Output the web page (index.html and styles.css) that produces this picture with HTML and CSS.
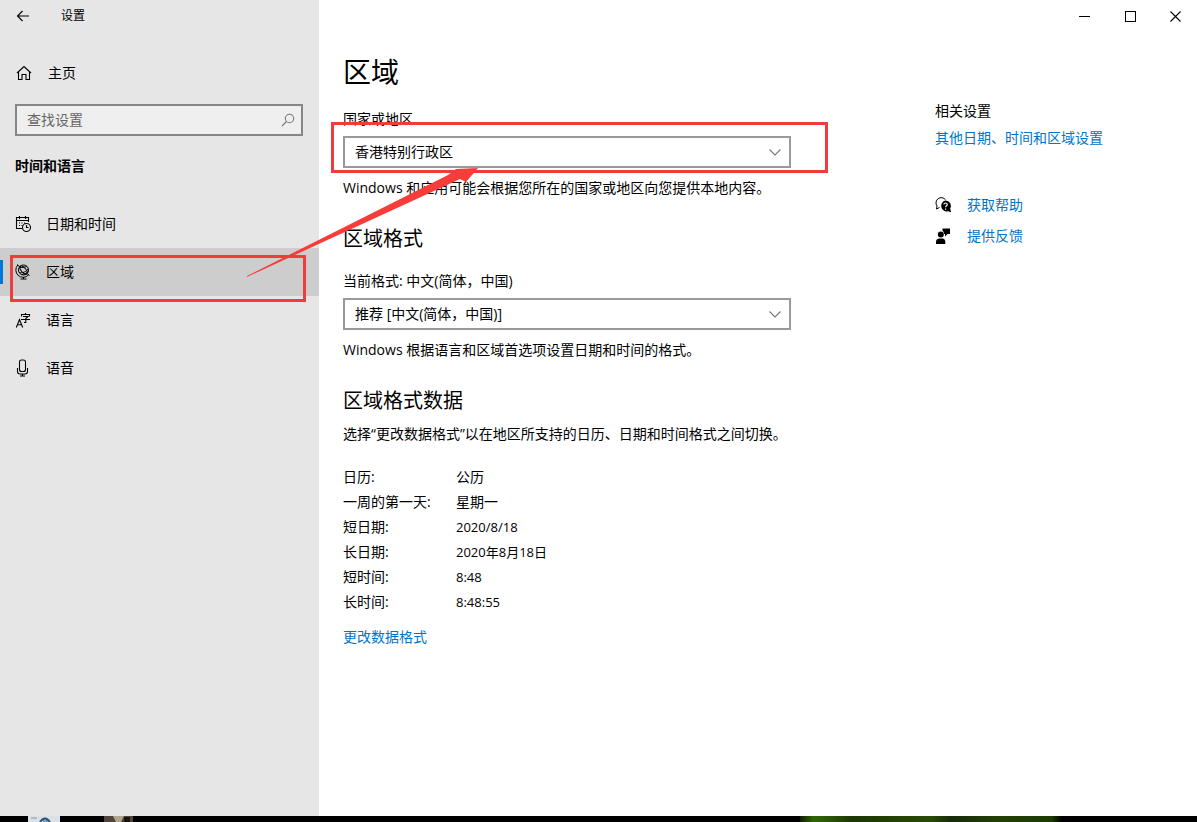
FILE: index.html
```html
<!DOCTYPE html>
<html lang="zh-CN">
<head>
<meta charset="utf-8">
<meta name="viewport" content="width=device-width, initial-scale=1">
<title>设置</title>
<link rel="stylesheet" href="styles.css">
</head>
<body>
<div class="window">
  <aside class="sidebar">
    <header class="side-title">
      <button class="back" type="button" aria-label="返回">
        <svg width="14" height="12" viewBox="0 0 14 12" class="line"><path d="M13 6H1.500M6.500 1L1.500 6l5 5"/></svg>
      </button>
      <span>设置</span>
    </header>
    <a class="home" href="#">
      <svg width="16" height="16" viewBox="0 0 16 16" class="line"><path d="M1 8L8 1.500 15 8M2.500 7v7.500h3.500V9.500h4v5h3.500V7"/></svg>
      <span>主页</span>
    </a>
    <label class="search">
      <input type="search" placeholder="查找设置" aria-label="查找设置">
      <svg width="14" height="14" viewBox="0 0 14 14" class="line"><circle cx="8.500" cy="5.500" r="4.200"/><path d="M5.500 8.500L1 13"/></svg>
    </label>
    <h2 class="side-heading">时间和语言</h2>
    <nav class="nav">
      <a href="#">
        <svg width="16" height="16" viewBox="0 0 16 16" class="line"><path d="M7 12.500H1.500v-11h12V6M1.500 4.500h12M4.500 0v3M10.500 0v3"/><path d="M4 7h1M6.500 7h1M9 7h1M4 9.500h1M6.500 9.500h1"/><circle cx="11.500" cy="11.500" r="4"/><path d="M11.500 9v2.500h2"/></svg>
        <span>日期和时间</span>
      </a>
      <a href="#" class="current" aria-current="page">
        <svg width="16" height="16" viewBox="0 0 16 16" class="line globe"><circle cx="8.500" cy="6" r="5"/><ellipse cx="8.500" cy="6" rx="2.300" ry="5" transform="rotate(-40 8.500 6)"/><path d="M4.500 3.500c3 .2 6-.3 7.500-1.500M4.200 8.500c3.300 1 7-.8 9-3.700M6.500 10.500c2.500 0 5-1 6.500-3"/><path d="M2.800 1A7 7 0 0 0 13.500 11M2 .5l2.500 2M12 9.500l2.500 2M8.500 13v2M5.500 15h6"/></svg>
        <span>区域</span>
      </a>
      <a href="#">
        <svg width="16" height="16" viewBox="0 0 16 16" class="line"><path d="M1.300 15.500L4.500 7.500l3.200 8M2.500 12.700h4"/><path d="M10.500 1v1.500M6.500 4.500v-2h8v2M8 4.500h5L10.800 6.500v4H9M6 7.500h9"/></svg>
        <span>语言</span>
      </a>
      <a href="#">
        <svg width="16" height="18" viewBox="0 0 16 18" class="line"><rect x="4.500" y="1" width="6" height="11.500" rx="2"/><path d="M2.500 9v3.500q0 2.500 2.500 2.500h5q2.500 0 2.500-2.500V9M7.500 15v2M5 17h5"/></svg>
        <span>语音</span>
      </a>
    </nav>
  </aside>

  <main class="main">
    <div class="controls">
      <button type="button" aria-label="最小化"><svg width="11" height="11" viewBox="0 0 11 11" class="line crisp"><path d="M0 5.500h11"/></svg></button>
      <button type="button" aria-label="最大化"><svg width="11" height="11" viewBox="0 0 11 11" class="line crisp"><path d="M.5.5h10v10H.5z"/></svg></button>
      <button type="button" aria-label="关闭"><svg width="11" height="11" viewBox="0 0 11 11" class="line"><path d="M.5.5l10 10M10.500.5l-10 10"/></svg></button>
    </div>
    <div class="columns">
      <section class="content">
        <h1>区域</h1>
        <label class="field-label" for="country">国家或地区</label>
        <div class="select">
          <select id="country"><option>香港特别行政区</option></select>
          <svg width="12" height="7" viewBox="0 0 12 7" class="line"><path d="M.5.5L6 6 11.500.5"/></svg>
        </div>
        <p class="hint">Windows 和应用可能会根据您所在的国家或地区向您提供本地内容。</p>

        <h2>区域格式</h2>
        <label class="field-label" for="format">当前格式: 中文(简体，中国)</label>
        <div class="select">
          <select id="format"><option>推荐 [中文(简体，中国)]</option></select>
          <svg width="12" height="7" viewBox="0 0 12 7" class="line"><path d="M.5.5L6 6 11.500.5"/></svg>
        </div>
        <p class="hint">Windows 根据语言和区域首选项设置日期和时间的格式。</p>

        <h2>区域格式数据</h2>
        <p class="data-intro">选择“更改数据格式”以在地区所支持的日历、日期和时间格式之间切换。</p>
        <table class="data">
          <tr><th scope="row">日历:</th><td>公历</td></tr>
          <tr><th scope="row">一周的第一天:</th><td>星期一</td></tr>
          <tr><th scope="row">短日期:</th><td class="numeric">2020/8/18</td></tr>
          <tr><th scope="row">长日期:</th><td class="numeric">2020年8月18日</td></tr>
          <tr><th scope="row">短时间:</th><td class="numeric">8:48</td></tr>
          <tr><th scope="row">长时间:</th><td class="numeric">8:48:55</td></tr>
        </table>
        <a class="link" href="#">更改数据格式</a>
      </section>

      <aside class="related">
        <h3>相关设置</h3>
        <a class="link" href="#">其他日期、时间和区域设置</a>
        <div class="support">
          <a class="link" href="#">
            <svg width="17" height="17" viewBox="0 0 17 17"><path d="M4.500 10.500L1.500 12l.5-3A4.800 4.800 0 1 1 10.500 2.800" fill="none" stroke="#000"/><path d="M10.500 3.500a5.500 5.500 0 0 1 4.700 8.300l1 3.500-3.300-1A5.500 5.500 0 1 1 10.500 3.500z" fill="#000"/><path d="M8.800 7.500q.2-1.500 1.800-1.500t1.700 1.500c0 1.200-1.700 1.300-1.700 2.800M10.600 11.500v1.200" fill="none" stroke="#fff" stroke-width="1.200"/></svg>
            <span>获取帮助</span>
          </a>
          <a class="link" href="#">
            <svg width="17" height="17" viewBox="0 0 17 17"><circle cx="5.800" cy="6.500" r="3"/><path d="M1 16v-2q0-3.500 3.500-3.500h2.800q3 0 3 3.500v2zM7.500.5H15V6h-2.500L10 8.500V6H9.200Q9 3.500 7.500 2.700z"/></svg>
            <span>提供反馈</span>
          </a>
        </div>
      </aside>
    </div>
  </main>
</div>
<div class="desktop-edge">
  <svg width="110" height="6" viewBox="0 0 110 6"><rect width="32" height="6" fill="#dce1e5"/><path d="M3 2h6" stroke="#8b9094"/><path d="M12 6q5-7 10 0" fill="none" stroke="#24567d" stroke-width="2"/><path d="M15 5h5" stroke="#24567d"/><rect x="76" width="29" height="6" fill="#51443b"/><path d="M85 0h11l-3 6h-5z" fill="#b0a58d"/><path d="M96 1h6v5h-6z" fill="#1b1512"/></svg>
  <div class="leaf"></div>
</div>

<div class="mark mark-nav"></div>
<div class="mark mark-country"></div>
<svg class="arrow" width="240" height="114" viewBox="0 0 240 114"><path d="M1 109L202 8l8-6 22-1-12 14-6-3L1 110z"/></svg>
</body>
</html>
```
FILE: styles.css
```css
* { box-sizing: border-box; }

body {
  margin: 0;
  min-height: 100vh;
  display: flex;
  flex-direction: column;
  position: relative;
  overflow-x: hidden;
  background: #fff;
  color: #000;
  font: 14px/20px "Open Sans", "Noto Sans CJK SC", sans-serif;
}

h1, h2, h3, p { margin: 0; font-weight: 400; }
a { color: inherit; text-decoration: none; }
svg { flex: none; display: block; }
button { border: 0; padding: 0; background: none; color: inherit; display: grid; place-items: center; }

.line { fill: none; stroke: currentColor; stroke-width: 1.1; }
.crisp { shape-rendering: crispEdges; }
.globe { stroke-width: 1; }

.window { flex: 1; display: grid; grid-template-columns: 319px 1fr; }

.sidebar { background: #e6e6e6; }
.side-title { display: flex; align-items: center; height: 32px; padding-left: 16px; gap: 31px; font-size: 12px; }
.home { display: flex; align-items: center; gap: 16px; height: 48px; margin: 17px 16px 7px; }

.search {
  display: flex;
  align-items: center;
  height: 32px;
  margin: 0 16px 0 15px;
  padding: 0 6px 0 10px;
  border: 2px solid #868686;
  background: #efefef;
  color: #777;
}
.search input { flex: 1; min-width: 0; border: 0; padding: 0; outline: 0; background: none; font: inherit; color: #000; }
.search input::placeholder { color: #666; opacity: 1; }

.side-heading { margin: 20px 15px 24px; font-size: 14px; font-weight: 700; }

.nav a { display: flex; align-items: center; gap: 15px; height: 48px; padding-left: 15px; }
.nav .current { background: linear-gradient(#0078d7, #0078d7) 0 50% / 3px 24px no-repeat #cdcdcd; }

.controls { display: grid; grid-template-columns: 46px 46px 44px; justify-content: end; height: 32px; }
.columns { display: flex; gap: 144px; padding: 20px 24px; }
.content { flex: 0 1 448px; }

h1 { font-size: 28px; line-height: 40px; }
.content h2 { margin-top: 27px; font-size: 20px; line-height: 28px; }
.field-label { display: block; margin: 17px 0 7px; }
h2 + .field-label { margin-top: 18px; }

.select { display: grid; align-items: center; }
.select > * { grid-area: 1 / 1; }
.select svg { justify-self: end; margin-right: 10px; color: #777; pointer-events: none; }
.select select {
  appearance: none;
  width: 100%;
  height: 32px;
  padding: 0 32px 0 10px;
  border: 2px solid #999;
  border-radius: 0;
  background: #fff;
  color: #000;
  font: inherit;
}

.hint { margin-top: 10px; white-space: nowrap; }
.data-intro { margin-top: 9px; white-space: nowrap; }
.data { margin: 20px 0 13px; border-collapse: collapse; }
.data th, .data td { height: 25px; padding: 0; font-weight: 400; text-align: left; }
.data th { width: 113px; }
.data .numeric { font-size: 13px; }

.link { color: #0074c8; }
.related { display: flex; flex-direction: column; padding-top: 49px; }
.related h3 { margin-bottom: 7px; font-size: 14px; }
.support { display: grid; gap: 11px; margin-top: 47px; }
.support .link { display: flex; align-items: center; gap: 15px; }
.support svg { fill: #000; }

.desktop-edge { display: flex; justify-content: space-between; height: 6px; padding: 0 135px 0 28px; background: #000; }
.leaf { width: 262px; background: linear-gradient(90deg, #101d05, #2e6606 5%, #285306 12%, #1c3604 20%, #294b06 50%, #172a0b 58%, #224006 75%, #1c3b04 96%, #000); }

.mark { position: absolute; border: 3px solid #f03c3c; pointer-events: none; }
.mark-nav { left: 10px; top: 255px; width: 296px; height: 47px; }
.mark-country { left: 331px; top: 122px; width: 497px; height: 51px; }
.arrow { position: absolute; left: 246px; top: 167px; fill: #f83c3a; pointer-events: none; }
```
